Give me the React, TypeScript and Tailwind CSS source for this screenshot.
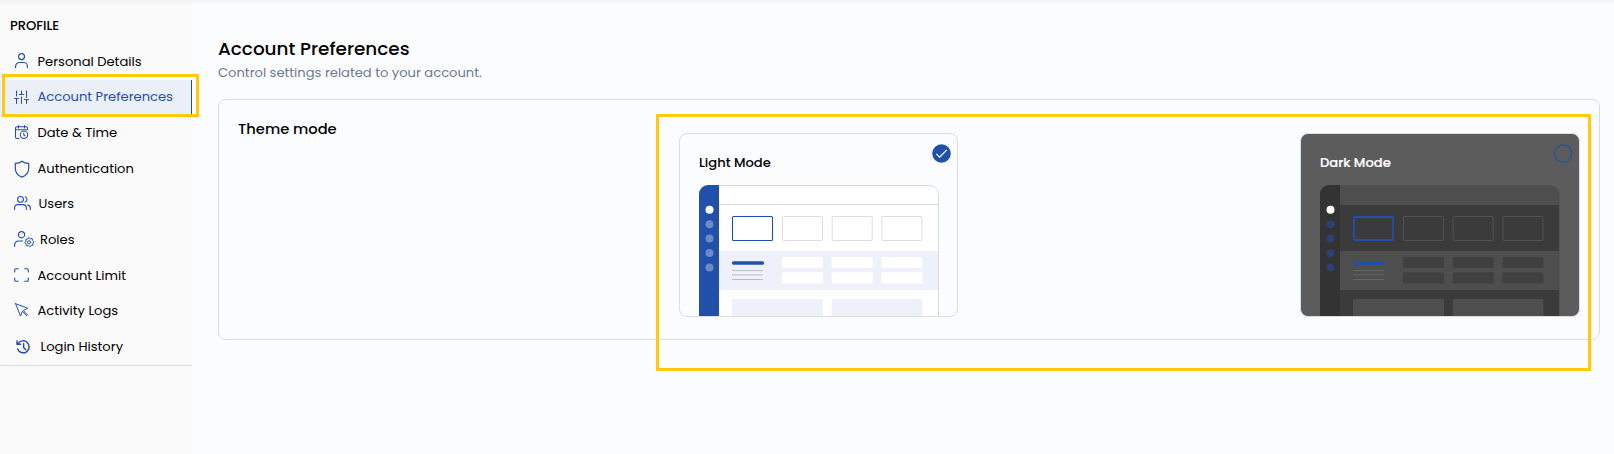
import type { ReactNode } from "react";

function Icon({ w = 15, h = 15, sw = 1.1, className = "", children }: { w?: number; h?: number; sw?: number; className?: string; children: ReactNode }) {
  return (
    <svg width={w} height={h} viewBox={`0 0 ${w} ${h}`} fill="none" stroke="#2450ad" strokeWidth={sw} strokeLinecap="round" strokeLinejoin="round" className={`shrink-0 overflow-visible ${className}`}>
      {children}
    </svg>
  );
}

const items: { label: string; icon: ReactNode; pad: string; active?: boolean }[] = [
  {
    label: "Personal Details",
    pad: "pl-[15px] gap-[9.500px]",
    icon: (
      <Icon w={13} h={15} sw={1.2} className="mb-[2px]">
        <circle cx="6.5" cy="3.6" r="3" />
        <path d="M.6 14.4v-1.2a3.7 3.7 0 0 1 3.7-3.7h4.4a3.7 3.7 0 0 1 3.7 3.7v1.2" />
      </Icon>
    ),
  },
  {
    label: "Account Preferences",
    pad: "pl-[14px] gap-[8.500px]",
    active: true,
    icon: (
      <Icon w={15} h={14} sw={1}>
        <path d="M2.5 1v5M2.5 8.5v5M7.5 1v3M7.5 7v6.5M12.5 1v6.5M12.5 10v3.5M.5 8.5h4M5.500 4.5h4M10.500 9.5h4" />
      </Icon>
    ),
  },
  {
    label: "Date & Time",
    pad: "pl-[15px] gap-[9.500px]",
    icon: (
      <Icon w={13} h={14} sw={1.1} className="mb-[2px]">
        <path d="M3.5 .5v2.5M9.5 .5v2.5M12.5 4V3.200A1.400 1.400 0 0 0 11.100 1.800H1.900A1.400 1.400 0 0 0 .5 3.200v8.900a1.400 1.400 0 0 0 1.400 1.400H4M.5 4.800h12" />
        <circle cx="9" cy="9.700" r="3.700" />
        <path d="M8.800 8v2l1.200.8" />
      </Icon>
    ),
  },
  {
    label: "Authentication",
    pad: "pl-[14px] gap-[7.500px]",
    icon: (
      <Icon w={16} h={18} sw={1.2}>
        <path d="M8 1.200c1.700 1.500 4 2.100 6.700 2.200v5c0 4.200-2.600 7-6.700 8.700-4.100-1.700-6.700-4.500-6.700-8.700v-5C4 3.300 6.300 2.700 8 1.200Z" />
      </Icon>
    ),
  },
  {
    label: "Users",
    pad: "pl-[14px] gap-[7.500px]",
    icon: (
      <Icon w={17} h={14} sw={1.1} className="mb-[2px]">
        <circle cx="6.500" cy="3.400" r="2.900" />
        <path d="M.6 13.500v-1.500a3.400 3.400 0 0 1 3.400-3.400h5a3.400 3.400 0 0 1 3.400 3.400v1.500M11.200.7a2.900 2.900 0 0 1 0 5.400M13.700 8.900a3.400 3.400 0 0 1 2.600 3.200v1.400" />
      </Icon>
    ),
  },
  {
    label: "Roles",
    pad: "pl-[14px] gap-[6px]",
    icon: (
      <Icon w={20} h={16} sw={1.2} className="mb-[2px]">
        <circle cx="7.500" cy="3.700" r="3.100" />
        <path d="M.6 15.300v-1.500a3.800 3.800 0 0 1 3.800-3.800h4.200" />
        <path strokeWidth="1" d="m15 6.700 1.400 1.100 1.800-.2.300 1.800 1.400 1.400-1 1.500.1 1.800-1.900.4-1.300 1.200-1.500-1-1.800.1-.4-1.800-1.300-1.300 1-1.500 0-1.900 1.800-.4Z" />
        <circle cx="15" cy="11.300" r="1.600" strokeWidth="1" />
      </Icon>
    ),
  },
  {
    label: "Account Limit",
    pad: "pl-[14px] gap-[8.500px]",
    icon: (
      <Icon w={15} h={14} sw={1.1} className="mb-[1px]">
        <path d="M.7 4V2A1.300 1.300 0 0 1 2 .7h2.300M10.700.7H13A1.300 1.300 0 0 1 14.300 2v2M14.300 10v2a1.300 1.300 0 0 1-1.300 1.300h-2.300M4.300 13.300H2A1.300 1.300 0 0 1 .7 12v-2" />
      </Icon>
    ),
  },
  {
    label: "Activity Logs",
    pad: "pl-[15px] gap-[8.500px]",
    icon: (
      <Icon w={14} h={14} sw={1} className="mb-[3px]">
        <path d="M.6.700 12.800 5.300 8.300 7.500l4.400 4.700M.6.700l4.900 12.400 1.900-4.900 4.400 4.500" />
      </Icon>
    ),
  },
  {
    label: "Login History",
    pad: "pl-[16px] gap-[9.500px]",
    icon: (
      <Icon w={15} h={14} sw={1.500}>
        <path d="M2 3.800A6 6 0 1 1 1.600 9M1 1v3.300h3.500M7.600 3.800v3.600l2 2.200" />
      </Icon>
    ),
  },
];

function Preview({ dark = false }: { dark?: boolean }) {
  const c = dark
    ? { rail: "#333333", top: "#4e4e4e", body: "#3b3b3b", band: "#4e4e4e", box: "#535353", cell: "#404040", line: "#656565", edge: "#535353", dot: "#2b4074", sep: "#4e4e4e" }
    : { rail: "#2150ab", top: "#ffffff", body: "#ffffff", band: "#eef1f9", box: "#dddddf", cell: "#ffffff", line: "#b9bcc3", edge: "#d9dadc", dot: "#6b8ac7", sep: "#d9dadc" };
  const cols = [83, 132.7, 182.400];
  return (
    <svg width="240" height="131" viewBox="0 0 240 131" className="block">
      <path d="M20 .5h210a9 9 0 0 1 9 9V131H20Z" fill={c.body} />
      <path d="M20 .5h210a9 9 0 0 1 9 9v10.300H20Z" fill={c.top} />
      <path d="M20 19.500h219" stroke={c.sep} />
      <path d="M20 66h219v39H20Z" fill={c.band} />
      <path d="M20 .5h210a9.500 9 0 0 1 9.500 9V131" fill="none" stroke={c.edge} />
      <path d="M9 0h11v131H0V9a9 9 0 0 1 9-9Z" fill={c.rail} />
      {[24.800, 39.200, 53.600, 68, 82.400].map((y, i) => (
        <circle key={y} cx="10.500" cy={y} r="4" fill={i === 0 ? "#ffffff" : c.dot} />
      ))}
      <rect x={dark ? 34 : 33.500} y={dark ? 32 : 31.500} width={dark ? 39 : 40} height={dark ? 23 : 24} rx="1" fill="none" stroke="#2150ab" strokeWidth={dark ? 1.800 : 1.100} />
      {cols.map((x) => (
        <g key={x}>
          <rect x={x + 0.5} y="31.500" width="40" height="24" rx="1" fill="none" stroke={c.box} />
          <rect x={x} y="72" width="41" height="11" rx="1.500" fill={c.cell} />
          <rect x={x} y="87.300" width="41" height="11.200" rx="1.500" fill={c.cell} />
        </g>
      ))}
      <rect x="33" y="76.200" width="32" height="3.600" rx="1.600" fill="#2150ab" />
      <path d="M33 85.600h31M33 89.900h31M33 94.500h31" stroke={c.line} />
      <path d="M33 131v-15.500a1.500 1.500 0 0 1 1.500-1.500h88a1.500 1.500 0 0 1 1.500 1.500V131ZM132.700 131v-15.500a1.500 1.500 0 0 1 1.500-1.500h87.700a1.500 1.500 0 0 1 1.500 1.500V131Z" fill={c.band} />
    </svg>
  );
}

function ModeCard({ dark = false }: { dark?: boolean }) {
  return (
    <div className={`h-[184px] overflow-hidden rounded-[8px] border border-[#dcdde0] ${dark ? "w-[280px] bg-[#5c5c5c]" : "w-[279px] bg-[#fbfcfe]"}`}>
      <div className="flex h-[51px] items-start justify-between pl-[19px] pr-[6px]">
        <h3 className={`pt-[19px] text-[13.1px] font-medium leading-[20px] ${dark ? "text-white [-webkit-text-stroke:0.2px_white]" : "text-black"}`}>
          {dark ? "Dark Mode" : "Light Mode"}
        </h3>
        <svg width="19" height="19" viewBox="0 0 19 19" fill="none" className="mt-[10px]">
          {dark ? (
            <circle cx="9.200" cy="9.500" r="8.600" stroke="#2150ab" strokeWidth="1.100" />
          ) : (
            <>
              <circle cx="9.500" cy="9.500" r="9.300" fill="#2150ab" />
              <path d="m4.300 9.800 3.300 3.300 7.200-7.300" stroke="#fff" strokeWidth="1.200" />
            </>
          )}
        </svg>
      </div>
      <div className="pl-[19px]">
        <Preview dark={dark} />
      </div>
    </div>
  );
}

export default function App() {
  return (
    <div className="relative flex h-[454px] w-[1614px] overflow-hidden whitespace-nowrap bg-[#fbfcfe] font-[Poppins,Inter,sans-serif] text-black">
      <div className="absolute inset-x-0 top-0 h-[5px] bg-gradient-to-b from-[#f2f3f4] to-transparent" />
      <aside className="w-[192px] shrink-0 bg-[#fafafa]">
        <div className="h-[366px] border-b border-[#dedfe1]">
          <h2 className="h-[44px] pl-[10px] pt-[16px] text-[13.1px] font-medium leading-[20px]">PROFILE</h2>
          <nav>
            {items.map((it) => (
              <div
                key={it.label}
                className={`flex h-[35.65px] items-center text-[13.1px] leading-[20px] ${it.pad} ${it.active ? "border-r border-[#2450ad] bg-[#eaeff8] text-[#2450ad]" : ""}`}
              >
                {it.icon}
                <span>{it.label}</span>
              </div>
            ))}
          </nav>
        </div>
      </aside>
      <main className="flex-1 pl-[26px] pr-[14px]">
        <div className="h-[99px] pt-[35px]">
          <h1 className="text-[18.4px] font-medium leading-[27px]">Account Preferences</h1>
          <p className="mt-[1px] text-[13.1px] leading-[20px] text-[#6b7a90]">Control settings related to your account.</p>
        </div>
        <section className="flex h-[241px] justify-between rounded-[8px] border border-[#dcdde0] pl-[19px] pr-[19px]">
          <h2 className="pt-[18px] text-[14.7px] font-medium leading-[22px]">Theme mode</h2>
          <div className="flex w-[901px] justify-between pt-[33px]">
            <ModeCard />
            <ModeCard dark />
          </div>
        </section>
      </main>
      <div className="absolute left-[2px] top-[74px] h-[43px] w-[197px] border-[3px] border-[#ffc90e]" />
      <div className="absolute left-[656px] top-[114px] h-[257px] w-[935px] border-[3px] border-[#ffc90e]" />
    </div>
  );
}
